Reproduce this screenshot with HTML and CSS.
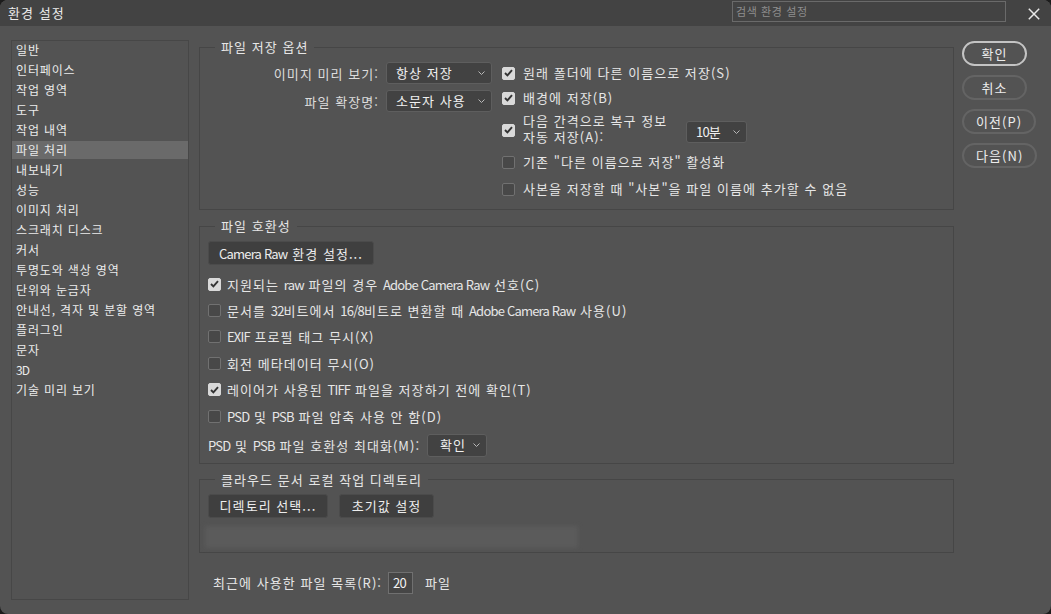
FILE: index.html
```html
<!DOCTYPE html>
<html lang="ko">
<head>
<meta charset="utf-8">
<title>환경 설정</title>
<link rel="stylesheet" href="styles.css">
</head>
<body>
<div class="window">
  <div class="titlebar">
    <div class="title">환경 설정</div>
    <div class="search">검색 환경 설정</div>
    <div class="close"><svg width="12" height="12" viewBox="0 0 12 12"><path d="M0.8 0.8L11.2 11.2M11.2 0.8L0.8 11.2" stroke="#e8e8e8" stroke-width="1.5" fill="none"/></svg></div>
  </div>
  <div class="main">
    <ul class="sidebar">
      <li>일반</li>
      <li>인터페이스</li>
      <li>작업 영역</li>
      <li>도구</li>
      <li>작업 내역</li>
      <li class="active">파일 처리</li>
      <li>내보내기</li>
      <li>성능</li>
      <li>이미지 처리</li>
      <li>스크래치 디스크</li>
      <li>커서</li>
      <li>투명도와 색상 영역</li>
      <li>단위와 눈금자</li>
      <li>안내선, 격자 및 분할 영역</li>
      <li>플러그인</li>
      <li>문자</li>
      <li><span class="lat">3D</span></li>
      <li>기술 미리 보기</li>
    </ul>

    <div class="content">
      <fieldset class="group g1">
        <legend>파일 저장 옵션</legend>
        <div class="g1-body">
          <div class="fields">
            <span class="flabel">이미지 미리 보기:</span>
            <div class="select sel-wide"><span>항상 저장</span><svg class="chev" width="7" height="4" viewBox="0 0 7 4"><path d="M0.5 0.5L3.5 3.5L6.5 0.5" stroke="#b8b8b8" fill="none"/></svg></div>
            <span class="flabel">파일 확장명:</span>
            <div class="select sel-wide"><span>소문자 사용</span><svg class="chev" width="7" height="4" viewBox="0 0 7 4"><path d="M0.5 0.5L3.5 3.5L6.5 0.5" stroke="#b8b8b8" fill="none"/></svg></div>
          </div>
          <div class="checks">
            <div class="chk r1"><span class="cb on"><svg width="9" height="8" viewBox="0 0 9 8"><path d="M1 4L3.4 6.4L8 1.2" stroke="#333" stroke-width="1.9" fill="none"/></svg></span><span>원래 폴더에 다른 이름으로 저장(S)</span></div>
            <div class="chk r2"><span class="cb on"><svg width="9" height="8" viewBox="0 0 9 8"><path d="M1 4L3.4 6.4L8 1.2" stroke="#333" stroke-width="1.9" fill="none"/></svg></span><span>배경에 저장(B)</span></div>
            <div class="chk r3"><span class="cb on"><svg width="9" height="8" viewBox="0 0 9 8"><path d="M1 4L3.4 6.4L8 1.2" stroke="#333" stroke-width="1.9" fill="none"/></svg></span><span class="two-line">다음 간격으로 복구 정보<br>자동 저장(A):</span>
              <div class="select sel-small"><span><span class="lat">10</span>분</span><svg class="chev" width="7" height="4" viewBox="0 0 7 4"><path d="M0.5 0.5L3.5 3.5L6.5 0.5" stroke="#b8b8b8" fill="none"/></svg></div>
            </div>
            <div class="chk r4"><span class="cb"></span><span>기존 "다른 이름으로 저장" 활성화</span></div>
            <div class="chk r5"><span class="cb"></span><span>사본을 저장할 때 "사본"을 파일 이름에 추가할 수 없음</span></div>
          </div>
        </div>
      </fieldset>

      <fieldset class="group">
        <legend>파일 호환성</legend>
        <div class="g2-body">
          <div class="btn btn-cr"><span class="lat">Camera Raw</span>&nbsp;환경 설정...</div>
          <div class="rows">
            <div class="chk2"><span class="cb on"><svg width="9" height="8" viewBox="0 0 9 8"><path d="M1 4L3.4 6.4L8 1.2" stroke="#333" stroke-width="1.9" fill="none"/></svg></span><span>지원되는 <span class="lat">raw</span> 파일의 경우 <span class="lat">Adobe Camera Raw</span> 선호(C)</span></div>
            <div class="chk2"><span class="cb"></span><span>문서를 <span class="lat">32</span>비트에서 <span class="lat">16/8</span>비트로 변환할 때 <span class="lat">Adobe Camera Raw</span> 사용(U)</span></div>
            <div class="chk2"><span class="cb"></span><span><span class="lat">EXIF</span> 프로필 태그 무시(X)</span></div>
            <div class="chk2"><span class="cb"></span><span>회전 메타데이터 무시(O)</span></div>
            <div class="chk2"><span class="cb on"><svg width="9" height="8" viewBox="0 0 9 8"><path d="M1 4L3.4 6.4L8 1.2" stroke="#333" stroke-width="1.9" fill="none"/></svg></span><span>레이어가 사용된 <span class="lat">TIFF</span> 파일을 저장하기 전에 확인(T)</span></div>
            <div class="chk2"><span class="cb"></span><span><span class="lat">PSD</span> 및 <span class="lat">PSB</span> 파일 압축 사용 안 함(D)</span></div>
          </div>
          <div class="maxrow">
            <span><span class="lat">PSD</span> 및 <span class="lat">PSB</span> 파일 호환성 최대화(M):</span>
            <div class="select sel-small sel-ok"><span>확인</span><svg class="chev" width="7" height="4" viewBox="0 0 7 4"><path d="M0.5 0.5L3.5 3.5L6.5 0.5" stroke="#b8b8b8" fill="none"/></svg></div>
          </div>
        </div>
      </fieldset>

      <fieldset class="group">
        <legend>클라우드 문서 로컬 작업 디렉토리</legend>
        <div class="g3-body">
          <div class="btnrow">
            <div class="btn btn-dir">디렉토리 선택...</div>
            <div class="btn btn-def">초기값 설정</div>
          </div>
          <div class="pathbar"></div>
        </div>
      </fieldset>

      <div class="recent">
        <span>최근에 사용한 파일 목록(R):</span>
        <div class="numinput"><span class="lat">20</span></div>
        <span>파일</span>
      </div>
    </div>

    <div class="actions">
      <div class="pbtn default">확인</div>
      <div class="pbtn">취소</div>
      <div class="pbtn">이전(P)</div>
      <div class="pbtn">다음(N)</div>
    </div>
  </div>
</div>
</body>
</html>
```

FILE: styles.css
```css
html, body {
  margin: 0;
  padding: 0;
  background: #1c1c1c;
}
body {
  font-family: "Noto Sans CJK KR", "Noto Sans", sans-serif;
  font-size: 13px;
  letter-spacing: 1.05px;
  color: #e6e6e6;
}
.lat {
  letter-spacing: -0.8px;
}
.window {
  width: 1051px;
  height: 614px;
  background: #535353;
  border-radius: 8px;
  overflow: hidden;
  display: flex;
  flex-direction: column;
}
.titlebar {
  height: 26px;
  flex-shrink: 0;
  background: #434343;
  display: flex;
  align-items: flex-start;
}
.title {
  padding-left: 8px;
  line-height: 26px;
  font-size: 13px;
  color: #ececec;
}
.search {
  margin-left: auto;
  margin-top: 1px;
  width: 269px;
  height: 19px;
  border: 1px solid #6a6a6a;
  padding-left: 3px;
  font-size: 11px;
  letter-spacing: 0.6px;
  line-height: 19px;
  color: #8e8e8e;
}
.close {
  width: 45px;
  height: 26px;
  display: flex;
  align-items: flex-start;
}
.close svg {
  margin-left: 22px;
  margin-top: 8px;
}
.main {
  flex: 1;
  display: flex;
  align-items: flex-start;
  padding: 13px 0 0 11px;
}
.sidebar {
  list-style: none;
  margin: 1px 0 0 0;
  padding: 0;
  width: 176px;
  height: 558px;
  border: 1px solid #474747;
  font-size: 12px;
  letter-spacing: 0.85px;
  color: #ebebeb;
}
.sidebar li {
  height: 18px;
  line-height: 18px;
  margin-bottom: 2px;
  padding-left: 4px;
}
.sidebar li.active {
  background: #6a6a6a;
}
.content {
  width: 755px;
  margin-left: 10px;
  display: flex;
  flex-direction: column;
}
.group {
  margin: 0 0 8px 0;
  padding: 0;
  border: 1px solid #464646;
  min-width: 0;
}
.group legend {
  margin-left: 15px;
  padding: 0 6px;
  line-height: 16px;
  font-size: 13px;
  color: #e6e6e6;
}
.g1-body {
  display: flex;
  padding: 7px 0 9px 0;
}
.fields {
  display: grid;
  grid-template-columns: 179px 106px;
  column-gap: 7px;
  row-gap: 6px;
  align-items: center;
  align-self: flex-start;
}
.flabel {
  text-align: right;
  color: #dcdcdc;
}
.select {
  box-sizing: border-box;
  height: 22px;
  background: #424242;
  border: 1px solid #5e5e5e;
  border-radius: 3px;
  display: flex;
  align-items: center;
  justify-content: space-between;
  padding: 0 6px 0 9px;
  color: #f0f0f0;
  line-height: 20px;
}
.sel-wide { width: 106px; }
.sel-small { width: 61px; }
.chev { flex-shrink: 0; }
.checks {
  margin-left: 10px;
  display: flex;
  flex-direction: column;
}
.chk {
  display: flex;
  align-items: center;
  gap: 8px;
  height: 22px;
  line-height: 16px;
}
.chk.r2 { margin-top: 3px; }
.chk.r3 { margin-top: 5px; height: 32px; }
.chk.r4 { margin-top: 5px; }
.chk.r5 { margin-top: 5px; }
.two-line {
  width: 155px;
  line-height: 16px;
  align-self: flex-start;
  margin-top: -1px;
}
.r3 .select { margin-top: 3px; }
.cb {
  box-sizing: border-box;
  width: 13px;
  height: 13px;
  flex-shrink: 0;
  border: 1px solid #717171;
  border-radius: 2px;
  background: #484848;
  display: flex;
  align-items: center;
  justify-content: center;
}
.cb.on {
  background: #d9d9d9;
  border-color: #d9d9d9;
}
.g2-body {
  padding: 7px 0 6px 8px;
}
.btn {
  box-sizing: border-box;
  height: 24px;
  background: #3f3f3f;
  border: 1px solid #4b4b4b;
  border-radius: 3px;
  display: flex;
  align-items: center;
  justify-content: center;
  color: #ededed;
}
.btn-cr { width: 166px; }
.rows {
  margin-top: 6px;
}
.chk2 {
  height: 26.4px;
  display: flex;
  align-items: center;
  gap: 6px;
}
.maxrow {
  margin-top: 4.6px;
  display: flex;
  align-items: center;
  gap: 7px;
}
.sel-ok { height: 23px; width: 60px; padding-left: 12px; }
.g3-body {
  padding: 6px 0 4px 8px;
}
.btnrow {
  display: flex;
  gap: 11px;
}
.btn-dir { width: 120px; }
.btn-def { width: 95px; }
.pathbar {
  margin: 8px 0 0 -3px;
  width: 373px;
  height: 22px;
  background: #5b5b5b;
  filter: blur(2px);
}
.recent {
  margin-top: 11px;
  padding-left: 14px;
  display: flex;
  align-items: center;
}
.numinput {
  box-sizing: border-box;
  margin-left: 6px;
  margin-right: 12px;
  width: 25px;
  height: 22px;
  border: 1px solid #707070;
  background: #464646;
  line-height: 20px;
  padding-left: 4px;
  color: #f2f2f2;
}
.actions {
  margin-left: 8px;
  margin-top: 2px;
  display: flex;
  flex-direction: column;
  align-items: flex-start;
  gap: 9px;
}
.pbtn {
  box-sizing: border-box;
  min-width: 65px;
  height: 25px;
  padding: 0 12px;
  border: 2px solid #646464;
  border-radius: 13px;
  display: flex;
  align-items: center;
  justify-content: center;
  color: #ececec;
}
.pbtn.default {
  border-color: #c4c4c4;
}
```
